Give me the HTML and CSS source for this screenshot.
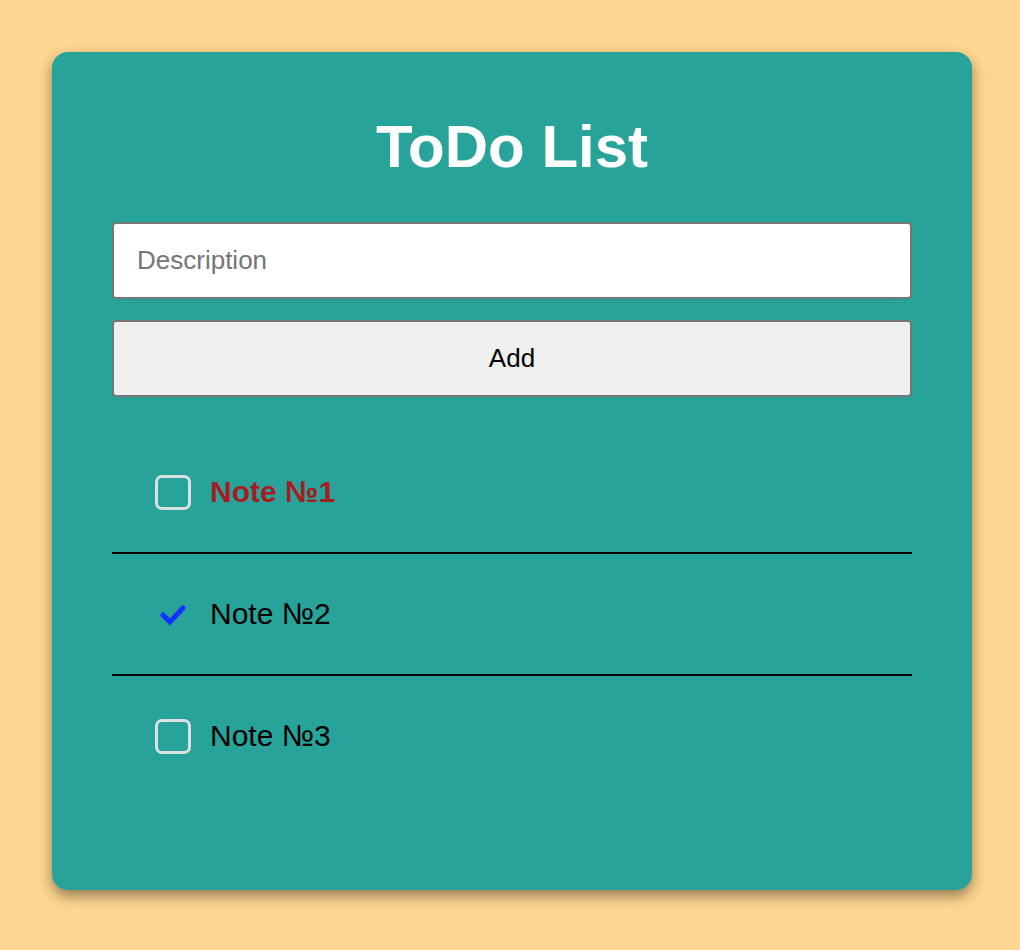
FILE: index.html
```html
<!DOCTYPE html>
<html>
<head>
<meta charset="utf-8">
<link rel="stylesheet" href="styles.css">
</head>
<body>
<main class="card">
  <h1 class="title">ToDo List</h1>
  <form class="form">
    <input class="input" type="text" placeholder="Description">
    <button class="btn" type="button">Add</button>
  </form>
  <ul class="list">
    <li class="item">
      <span class="box"></span>
      <span class="text text-important">Note №1</span>
    </li>
    <li class="item">
      <span class="check">
        <svg width="26" height="22" viewBox="0 0 26 22"><path d="M3 11 L10 18 L23 4" fill="none" stroke="#1432ff" stroke-width="5" stroke-linecap="round" stroke-linejoin="miter"/></svg>
      </span>
      <span class="text">Note №2</span>
    </li>
    <li class="item">
      <span class="box"></span>
      <span class="text">Note №3</span>
    </li>
  </ul>
</main>
</body>
</html>
```

FILE: styles.css
```css
* { box-sizing: border-box; }
html, body { margin: 0; padding: 0; }
body {
  background: #fed691;
  font-family: "Liberation Sans", Arial, sans-serif;
  padding: 52px 48px 60px 52px;
}
.card {
  width: 920px;
  height: 838px;
  background: #28a39a;
  border-radius: 16px;
  box-shadow: 0 6px 14px rgba(0, 0, 0, 0.42);
  padding: 60px 60px 0;
}
.title {
  margin: 0 0 41px;
  font-size: 60px;
  line-height: 69px;
  font-weight: bold;
  color: #fff;
  text-align: center;
}
.form {
  display: flex;
  flex-direction: column;
  gap: 21px;
}
.input, .btn {
  height: 77px;
  width: 100%;
  border: 2px solid #767676;
  border-radius: 4px;
  font-family: "Liberation Sans", Arial, sans-serif;
  font-size: 26px;
}
.input {
  background: #fff;
  padding: 0 23px;
  color: #000;
  outline: none;
}
.input::placeholder { color: #757575; }
.btn {
  background: #efefef;
  color: #000;
}
.list {
  list-style: none;
  margin: 35px 0 0;
  padding: 0;
}
.item {
  height: 122px;
  display: flex;
  align-items: center;
  gap: 19px;
  padding-left: 43px;
  border-bottom: 2px solid #000;
}
.item:last-child { border-bottom: none; height: 120px; }
.box {
  width: 36px;
  height: 35px;
  border: 3px solid #dce2e1;
  border-radius: 7px;
  flex: none;
}
.check {
  width: 36px;
  height: 35px;
  display: flex;
  align-items: center;
  justify-content: center;
  flex: none;
}
.check svg { display: block; margin-top: 2px; }
.text {
  font-size: 30px;
  color: #000;
}
.text-important {
  font-weight: bold;
  color: #a61c22;
}
```
